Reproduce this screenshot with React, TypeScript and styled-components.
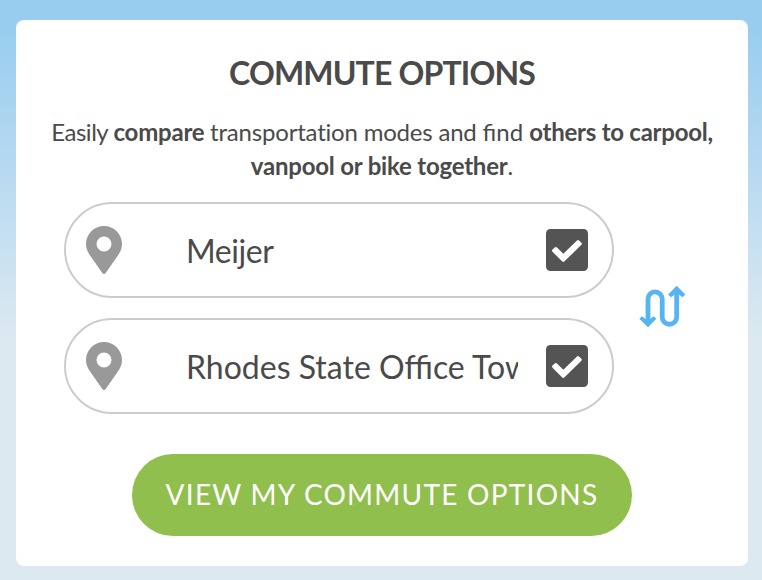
import React from "react";
import styled, { createGlobalStyle } from "styled-components";

const GlobalStyle = createGlobalStyle`
  * { box-sizing: border-box; }
  body { margin: 0; font-family: Lato, "Open Sans", sans-serif; color: #4a4a4a; }
`;

const Page = styled.main`
  height: 580px;
  padding: 20px 14px 14px 16px;
  background: linear-gradient(#99cdf0 0, #99cdf0 30px, #dce9f1 340px, #dce9f1 100%);
`;

const Card = styled.section`
  height: 546px;
  padding-top: 33px;
  background: #fff;
  border-radius: 8px;
  display: flex;
  flex-direction: column;
  align-items: center;
`;

const Title = styled.h1`
  margin: 0;
  font-size: 32px;
  line-height: 40px;
  font-weight: 700;
  letter-spacing: -0.85px;
  white-space: nowrap;
`;

const Description = styled.p`
  margin: 22px 0 0;
  font-size: 24px;
  line-height: 34px;
  text-align: center;
  white-space: nowrap;
`;

const Phrase = styled.span<{ $spacing: number; $bold?: boolean }>`
  font-weight: ${(p) => (p.$bold ? 700 : 400)};
  letter-spacing: ${(p) => p.$spacing}px;
`;

const Route = styled.div`
  width: 100%;
  margin-top: 19px;
  padding-left: 48px;
  display: flex;
  align-items: center;
  gap: 24px;
`;

const Fields = styled.div`
  display: grid;
  gap: 20px;
`;

const Field = styled.label`
  width: 550px;
  height: 96px;
  padding: 0 24px 0 20px;
  border: 2px solid #ccc;
  border-radius: 48px;
  display: flex;
  align-items: center;
`;

const Place = styled.span<{ $spacing: number }>`
  width: 332px;
  margin: 0 28px 0 64px;
  padding-top: 2px;
  font-size: 32px;
  line-height: 44px;
  letter-spacing: ${(p) => p.$spacing}px;
  white-space: nowrap;
  overflow: hidden;
`;

const Icon = styled.svg`
  display: block;
  flex: none;
`;

const SwapIcon = styled(Icon)`
  margin-bottom: 3px;
`;

const Submit = styled.button`
  width: 500px;
  height: 82px;
  margin-top: 40px;
  padding: 0 0 2px;
  border: 0;
  border-radius: 41px;
  background: #91bf4d;
  color: #fff;
  font: 400 28px/40px Lato, sans-serif;
  letter-spacing: 1.25px;
  white-space: nowrap;
`;

const Pin = () => (
  <Icon width="36" height="48" viewBox="0 0 36 48" fill="#999">
    <path
      fillRule="evenodd"
      d="M18 0C8.1 0 0 8 0 18c0 4 1.2 7.2 3.4 10.5l12.9 18.6q1.7 1.8 3.4 0l12.9-18.6C34.8 25.2 36 22 36 18 36 8 27.9 0 18 0ZM18 10.5a7.5 7.5 0 1 1 0 15a7.5 7.5 0 1 1 0-15Z"
    />
  </Icon>
);

const Check = () => (
  <Icon width="42" height="42" viewBox="0 0 42 42">
    <rect width="42" height="42" rx="4.5" fill="#545454" />
    <path
      d="M6.5 20.6 8.7 18.4Q9.9 17.4 11 18.4L17.3 24.7 31 11.4Q32 10.5 33 11.4L35.4 13.8Q36.4 14.8 35.4 15.8L18.3 32.6Q17.3 33.5 16.3 32.6L6.5 22.8Q5.5 21.7 6.5 20.6Z"
      fill="#fff"
    />
  </Icon>
);

const Swap = () => (
  <SwapIcon width="48" height="44" viewBox="0 0 48 44">
    <path
      d="M10 36V14a7.1 7.1 0 0 1 14.2 0v18a7.25 7.25 0 0 0 14.5 0V6"
      fill="none"
      stroke="#56b4f2"
      strokeWidth="4.8"
    />
    <path
      d="M1.3 33.8 3.9 31.2 10 35.5 15.7 31.2 18.3 33.8 10 42.3ZM30.1 9.5 38.7.8 47.4 9.5 44.5 12.3 38.7 8 33 12.3Z"
      fill="#56b4f2"
    />
  </SwapIcon>
);

const places = [
  { name: "Meijer", spacing: -0.4 },
  { name: "Rhodes State Office Tower", spacing: 0 },
];

export default function App() {
  return (
    <>
      <GlobalStyle />
      <Page>
        <Card>
          <Title>COMMUTE OPTIONS</Title>
          <Description>
            <Phrase $spacing={-0.45}>Easily </Phrase>
            <Phrase $spacing={-0.2} $bold>compare </Phrase>
            <Phrase $spacing={-0.2}>transportation modes and </Phrase>
            <Phrase $spacing={0}>find </Phrase>
            <Phrase $spacing={-0.25} $bold>others to carpool,</Phrase>
            <br />
            <Phrase $spacing={-0.2} $bold>vanpool or bike together</Phrase>.
          </Description>
          <Route>
            <Fields>
              {places.map((place) => (
                <Field key={place.name}>
                  <Pin />
                  <Place $spacing={place.spacing}>{place.name}</Place>
                  <Check />
                </Field>
              ))}
            </Fields>
            <Swap />
          </Route>
          <Submit>VIEW MY COMMUTE OPTIONS</Submit>
        </Card>
      </Page>
    </>
  );
}
